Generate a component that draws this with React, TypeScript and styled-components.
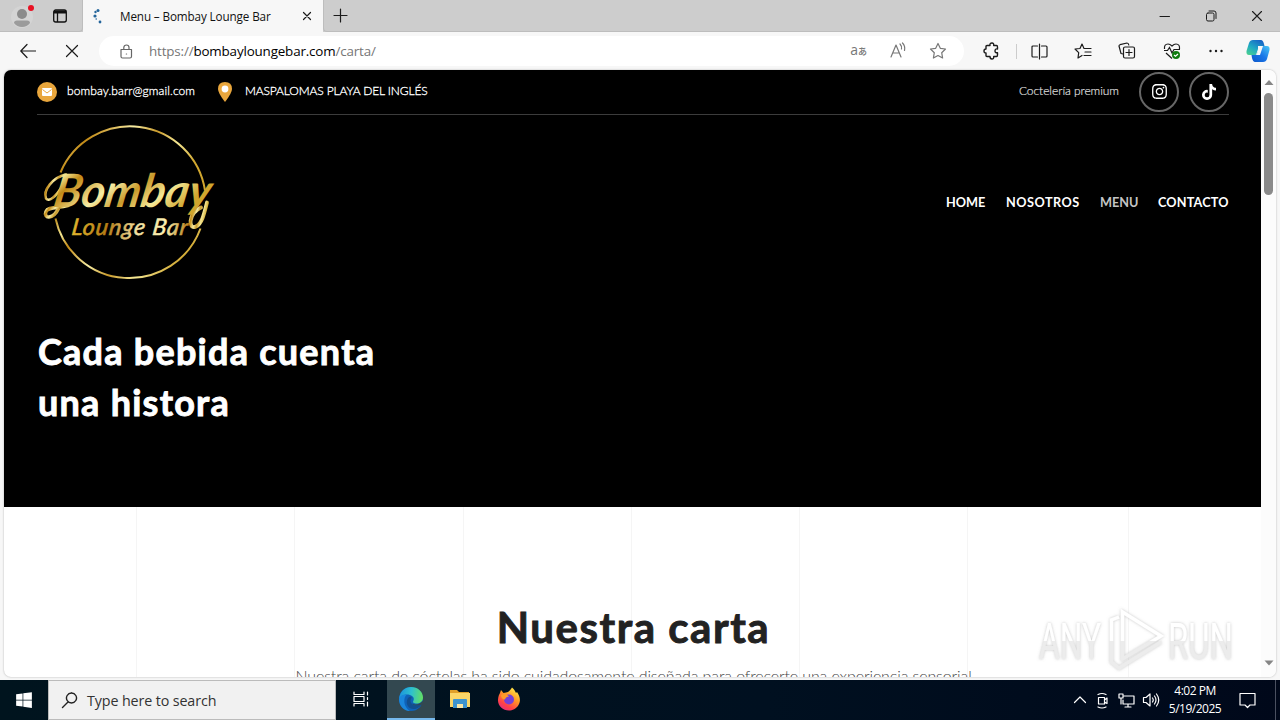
import React from 'react'
import styled, { createGlobalStyle } from 'styled-components'
import { FaInstagram, FaTiktok, FaWindows } from 'react-icons/fa6'

const GlobalStyle = createGlobalStyle`
  * {
    box-sizing: border-box;
  }

  body {
    margin: 0;
    overflow: hidden;
    background-color: #f7f7f7;
    font-family: 'Open Sans', 'Noto Sans', sans-serif;
  }

  svg {
    display: block;
    flex: none;
  }
`

const Desktop = styled.div`
  position: relative;
  display: flex;
  flex-direction: column;
  width: 1280px;
  height: 720px;
  overflow: hidden;
`

const TabStrip = styled.div`
  display: flex;
  height: 32px;
  background-color: #cdcdcd;
`

const Profile = styled.div`
  display: flex;
  align-items: center;
  gap: 16px;
  width: 83px;
  padding-left: 11px;
  border-right: 1px solid #bdbdbd;
  border-bottom: 1px solid #bdbdbd;
  border-bottom-right-radius: 4px;
`

const Tab = styled.div`
  display: flex;
  align-items: center;
  width: 240px;
  padding: 0 11px 0 9px;
  background-color: #f7f7f7;
`

const TabTitle = styled.span`
  flex: 1;
  margin-left: 16px;
  font-size: 11.7px;
  letter-spacing: -0.12px;
  white-space: nowrap;
  color: #111;
`

const StripRest = styled.div`
  display: flex;
  flex: 1;
  align-items: center;
  justify-content: space-between;
  padding: 0 17px 0 9px;
  border-bottom: 1px solid #bdbdbd;
  border-left: 1px solid #bdbdbd;
  border-bottom-left-radius: 4px;
`

const WindowButtons = styled.div`
  display: flex;
  align-items: center;
  gap: 34px;
`

const Toolbar = styled.div`
  display: flex;
  align-items: center;
  height: 38px;
  padding: 0 2px 0 20px;
  background-color: #f7f7f7;
`

const NavButtons = styled.div`
  display: flex;
  align-items: center;
  gap: 28px;
  width: 79px;
`

const AddressBar = styled.div`
  display: flex;
  align-items: center;
  width: 865px;
  height: 30px;
  padding: 0 17px 0 20px;
  border-radius: 15px;
  background-color: #fff;
`

const Url = styled.span`
  flex: 1;
  margin-left: 15px;
  font-size: 13.4px;
  letter-spacing: -0.16px;
  color: #767676;
`

const Host = styled.span`
  color: #000;
`

const AddressActions = styled.div`
  display: flex;
  align-items: center;
  gap: 22px;
  color: #777;
`

const Translate = styled.span`
  font-family: 'Open Sans', 'Noto Sans CJK JP', sans-serif;
  font-size: 14px;
  line-height: 18px;

  small {
    font-size: 9px;
    font-weight: 500;
  }
`

const ToolActions = styled.div`
  display: grid;
  grid-template-columns: 36px 8px repeat(5, 44.2px) 40px;
  align-items: center;
  justify-items: center;
  padding-left: 9px;
`

const Divider = styled.i`
  justify-self: end;
  width: 1px;
  height: 15px;
  background-color: #ccc;
`

const Viewport = styled.div`
  display: flex;
  height: 607px;
  margin: 0 4px 3px;
  border-radius: 7px;
  background-color: #fff;
  box-shadow: 0 0 2px #aaa;
  overflow: hidden;
`

const Page = styled.div`
  display: flex;
  flex-direction: column;
  width: 1257px;
  overflow: hidden;
  font-family: Lato, sans-serif;
`

const ScrollBar = styled.div`
  display: flex;
  flex: 1;
  flex-direction: column;
  align-items: center;
  padding: 10px 0 11px;
  background-color: #fcfcfc;
`

const Thumb = styled.div`
  width: 9px;
  height: 102px;
  margin: 7px 0 auto;
  border-radius: 5px;
  background-color: #8a8a8a;
`

const Hero = styled.header`
  flex: none;
  height: 437px;
  padding: 0 32px 0 33px;
  background-color: #000;
  color: #fff;
`

const TopBar = styled.div`
  display: flex;
  align-items: center;
  height: 45px;
  border-bottom: 1px solid #3c3c3c;
  font-size: 12px;
  font-weight: 300;
`

const Contact = styled.span<{ $spacing: number; $indent: number }>`
  margin-left: ${(props) => props.$indent}px;
  margin-top: -3px;
  letter-spacing: ${(props) => props.$spacing}px;
  white-space: nowrap;
  -webkit-text-stroke: 0.3px #fff;
`

const Badge = styled.span`
  display: flex;
  align-items: center;
  justify-content: center;
  width: 20px;
  height: 20px;
  border-radius: 50%;
  background-color: #e9a63c;
`

const PinBox = styled.span`
  width: 14px;
  margin-left: auto;
`

const MailGroup = styled.div`
  display: flex;
  align-items: center;
  width: 195px;
`

const Tagline = styled.span`
  margin: -3px 20px 0 auto;
  letter-spacing: -0.05px;
  color: #e4e4e4;
  -webkit-text-stroke: 0.15px #e4e4e4;
`

const Social = styled.a`
  display: flex;
  align-items: center;
  justify-content: center;
  width: 40px;
  height: 40px;
  padding-bottom: 1px;
  border: 2px solid #666;
  border-radius: 50%;

  & + & {
    margin-left: 10px;
  }
`

const Brand = styled.div`
  display: flex;
  align-items: center;
  justify-content: space-between;
  height: 174px;
`

const Menu = styled.nav`
  display: flex;
  gap: 20px;
`

const MenuLink = styled.a<{ $width: number; $active?: boolean }>`
  width: ${(props) => props.$width}px;
  font-size: 12.7px;
  font-weight: 700;
  letter-spacing: ${(props) => (props.$width > 70 ? (props.$width - 69.5) * 0.11 : 0)}px;
  white-space: nowrap;
  color: ${(props) => (props.$active ? '#c4c4c4' : '#fff')};
`

const HeroTitle = styled.h1`
  width: 360px;
  margin: 37px 0 0 1px;
  font-size: 36px;
  line-height: 51px;
  font-weight: 700;
  letter-spacing: 1.25px;
  -webkit-text-stroke: 0.9px #fff;
`

const Columns = styled.section`
  display: grid;
  flex: 1;
  grid-template-columns: 133px 158px 169px 168px 168px 168px 161px 1fr;
  grid-template-rows: 170px;
`

const Column = styled.i<{ $index: number }>`
  grid-row: 1;
  grid-column: ${(props) => props.$index};
  border-right: 1px solid #f5f5f5;
`

const Copy = styled.div`
  grid-row: 1;
  grid-column: 1 / -1;
  padding: 94px 0 0 2px;
  text-align: center;
`

const SectionTitle = styled.h2`
  margin: 0;
  font-size: 42px;
  line-height: 52px;
  letter-spacing: 1.55px;
  color: #222;
  -webkit-text-stroke: 0.9px #222;
`

const Intro = styled.p`
  margin: 13px 0 0;
  font-size: 16px;
  line-height: 20px;
  font-weight: 300;
  letter-spacing: -0.12px;
  white-space: nowrap;
  color: #444;
`

const Watermark = styled.div`
  position: absolute;
  left: 1030px;
  top: 602px;
`

const TaskBar = styled.footer`
  display: flex;
  height: 40px;
  background: linear-gradient(90deg, #00141e, #001020 60%, #00081a);
  color: #fff;
`

const Start = styled.div`
  display: flex;
  align-items: center;
  justify-content: center;
  width: 48px;
`

const Search = styled.div`
  display: flex;
  align-items: center;
  gap: 9px;
  width: 288px;
  padding-left: 12px;
  border: 1px solid #bbb;
  background-color: #f1f1f1;
  font-size: 14.3px;
  letter-spacing: -0.12px;
  color: #333;
`

const TaskButton = styled.div<{ $active?: boolean }>`
  display: flex;
  align-items: center;
  justify-content: center;
  width: ${(props) => (props.$active ? 48 : 49)}px;
  margin-left: ${(props) => (props.$active ? 2 : 0)}px;
  border-bottom: 2px solid ${(props) => (props.$active ? '#76b9ed' : 'transparent')};
  background-color: ${(props) => (props.$active ? '#334850' : 'transparent')};
`

const Tray = styled.div`
  display: flex;
  align-items: center;
  margin-left: auto;
  padding-right: 4px;
`

const TrayIcons = styled.div`
  display: flex;
  align-items: center;
  gap: 7px;
  margin-right: 1px;
`

const Clock = styled.div`
  display: flex;
  flex-direction: column;
  align-items: center;
  width: 68px;
  font-size: 12px;
  line-height: 18px;
  letter-spacing: -0.5px;
  white-space: nowrap;
`

const Notifications = styled.div`
  display: flex;
  align-items: center;
  width: 47px;
  height: 40px;
  padding-left: 10px;
  border-right: 1px solid #4a5060;
`

interface LineIconProps {
  d: string
  size?: number
  color?: string
  width?: number
}

function LineIcon({ d, size = 16, color = '#1b1b1b', width = 1.2 }: LineIconProps) {
  return (
    <svg
      width={size}
      height={size}
      viewBox={`0 0 ${size} ${size}`}
      fill="none"
      stroke={color}
      strokeWidth={width}
      strokeLinecap="round"
      strokeLinejoin="round"
    >
      <path d={d} />
    </svg>
  )
}

function BrandLogo() {
  return (
    <svg width="186" height="164" viewBox="37 119.5 186 164">
      <defs>
        <linearGradient id="gold" x1="0" y1="0" x2="1" y2="0.35">
          <stop offset="0" stopColor="#b98a1c" />
          <stop offset="0.12" stopColor="#f3e590" />
          <stop offset="0.22" stopColor="#c28a16" />
          <stop offset="0.45" stopColor="#f7eda4" />
          <stop offset="0.62" stopColor="#c99a2b" />
          <stop offset="0.8" stopColor="#f5e895" />
          <stop offset="1" stopColor="#d0a62e" />
        </linearGradient>
        <linearGradient id="goldSoft" x1="0" y1="0" x2="1" y2="0">
          <stop offset="0" stopColor="#e0b52e" />
          <stop offset="0.3" stopColor="#b57c14" />
          <stop offset="0.55" stopColor="#f1dfa0" />
          <stop offset="0.8" stopColor="#fbf1b0" />
          <stop offset="1" stopColor="#b57c14" />
        </linearGradient>
      </defs>
      <g fill="none" stroke="url(#gold)" strokeWidth="2">
        <path d="M60.500 172A75.700 75.700 0 0 1 205 190" />
        <path d="M200.500 228A75.700 75.700 0 0 1 55.500 218" />
      </g>
      {/* entry swash of the B, foot of the B and the tail of the y */}
      <g fill="none" stroke="url(#gold)" strokeLinecap="round">
        <path d="M66 174C52 177 43 190 46 198C49 202 56 196 62 186" strokeWidth="2.500" />
        <path d="M59 207C53 220 43 218 46 211C48 206 58 208 68 205" strokeWidth="3.500" />
        <path d="M201 207C188 213 188 230 196 226C202 223 204 214 207 202" strokeWidth="3.800" />
      </g>
      <g fontFamily="Lato, sans-serif" fontStyle="italic" fontWeight="700">
        <text
          x="0"
          y="0"
          transform="translate(52 206) skewX(-10)"
          fontSize="46"
          textLength="157"
          lengthAdjust="spacingAndGlyphs"
          fill="url(#gold)"
        >
          Bombay
        </text>
        <text
          x="0"
          y="0"
          transform="translate(71 234) skewX(-8)"
          fontSize="23"
          fontWeight="400"
          textLength="116"
          fill="url(#goldSoft)"
          stroke="url(#goldSoft)"
          strokeWidth="0.600"
        >
          Lounge Bar
        </text>
      </g>
    </svg>
  )
}

function CopilotIcon() {
  return (
    <svg width="24" height="24" viewBox="0 0 24 24">
      <defs>
        <linearGradient id="copA" x1="0" y1="1" x2="0.7" y2="0">
          <stop offset="0" stopColor="#4fd48a" />
          <stop offset="0.5" stopColor="#1fa9c4" />
          <stop offset="1" stopColor="#1766c6" />
        </linearGradient>
        <linearGradient id="copB" x1="1" y1="0" x2="0" y2="1">
          <stop offset="0" stopColor="#49c8f5" />
          <stop offset="0.5" stopColor="#1976e8" />
          <stop offset="1" stopColor="#0d57c9" />
        </linearGradient>
      </defs>
      <path d="M7 1H15Q17 1 18 5L18.500 7H15Q13 7 12 10L10 16H3Q0 16 .5 12L3 4Q4 1 7 1Z" fill="url(#copA)" />
      <path d="M17 23H9Q7 23 6 19L5.500 16H9Q11 16 12 13L14 7H21Q24 7 23.500 11L21 20Q20 23 17 23Z" fill="url(#copB)" />
      <path d="M12 7H17L14 16H9Q11 16 12 12Z" fill="#f7f7f7" />
    </svg>
  )
}

function EdgeIcon() {
  return (
    <svg width="26" height="26" viewBox="0 0 26 26">
      <defs>
        <linearGradient id="edgeTop" x1="0" y1="0.4" x2="1" y2="0.5">
          <stop offset="0" stopColor="#1b93dc" />
          <stop offset="0.5" stopColor="#2ec0cf" />
          <stop offset="1" stopColor="#63df62" />
        </linearGradient>
      </defs>
      <circle cx="13" cy="13" r="12" fill="#0f62b8" />
      <path
        d="M1 13C2 5 7 1 13 1C20 1 25 6 25 11.500C25 16 21 18 17.500 17.500C15 17 14.500 16 15.500 14.500C17 11 13 8.500 9 8.500C5 8.500 2 11 1 13Z"
        fill="url(#edgeTop)"
      />
      <path d="M14 17.500C17 19.500 22 18.500 24.500 15L26 17L23.500 19C20 20.500 15 20 14 17.500Z" fill="#334850" />
      <path d="M9.500 13C7 18 11 24 17 23C20 22.500 22.500 20.500 23.500 18.500C19 20.500 13 19.500 12.500 15C12.400 13 14 12 13.500 11C12 10.500 10.500 11 9.500 13Z" fill="#124f8f" />
      <path d="M1 13C2 9 6 8 9 8.500C5 11 5 21 12 25C5 25 1 19 1 13Z" fill="#1a86dc" />
    </svg>
  )
}

function FolderIcon() {
  return (
    <svg width="22" height="20" viewBox="0 0 22 20">
      <path d="M1 1H8L10 3H20V7H1Z" fill="#e0a02a" />
      <path d="M1 4H21V18H1Z" fill="#fbd668" />
      <path d="M4 19V11Q4 10 5 10H17Q18 10 18 11V19H14V15H8V19Z" fill="#3e94cf" />
      <path d="M8 19V15H14V19Z" fill="#fbe7a6" />
    </svg>
  )
}

function FirefoxIcon() {
  return (
    <svg width="24" height="24" viewBox="0 0 24 24">
      <defs>
        <linearGradient id="fox" x1="0.8" y1="0" x2="0.2" y2="1">
          <stop offset="0" stopColor="#fff04d" />
          <stop offset="0.4" stopColor="#ff9a24" />
          <stop offset="0.75" stopColor="#ff4147" />
          <stop offset="1" stopColor="#e42a82" />
        </linearGradient>
      </defs>
      <path
        d="M4 3L6.500 6L9 5.500C11 5.500 13 4 15 .5C17 2 18 4 19 6L20 5C23 9 24 14 21.500 18C19 22 15.500 23.500 12 23.500C5.500 23.500 .5 18.500 1 12.500C1.200 9 2.500 7 3 6Z"
        fill="url(#fox)"
      />
      <circle cx="12" cy="12.500" r="5" fill="#7340d8" />
      <path d="M4 8C7 6 10 7 12 9.500C10 9.500 8.500 10.500 8 12.500C6 12.500 4 11 4 8Z" fill="#ff9b28" />
    </svg>
  )
}

function AnyRunMark() {
  return (
    <svg width="210" height="72" viewBox="1030 602 210 72">
      <defs>
        <linearGradient id="mark" x1="0" y1="620" x2="0" y2="662" gradientUnits="userSpaceOnUse">
          <stop offset="0.500" stopColor="#fff" />
          <stop offset="0.510" stopColor="#ececec" />
        </linearGradient>
        <filter id="halo" x="-10%" y="-10%" width="120%" height="120%">
          <feDropShadow dx="0" dy="0" stdDeviation="1.500" floodColor="#888" floodOpacity="0.5" />
        </filter>
      </defs>
      <g filter="url(#halo)">
        <g fontFamily="Roboto, sans-serif" fontSize="50" fontWeight="400" fill="url(#mark)">
          <text x="1039" y="659" textLength="62" lengthAdjust="spacingAndGlyphs">
            ANY
          </text>
          <text x="1168" y="659" textLength="65" lengthAdjust="spacingAndGlyphs">
            RUN
          </text>
        </g>
        <g fill="none" stroke="url(#mark)" strokeWidth="3.500">
          <path d="M1122.500 612L1161 636L1122.500 659Z" />
          <path d="M1119 617L1111.500 620V662L1119 668L1161 642" />
        </g>
      </g>
    </svg>
  )
}

const menu = [
  { label: 'HOME', width: 40 },
  { label: 'NOSOTROS', width: 74 },
  { label: 'MENU', width: 38, active: true },
  { label: 'CONTACTO', width: 71 },
]

const star = 'M9 1.500L11.300 6.300L16.500 7L12.700 10.700L13.600 16L9 13.500L4.400 16L5.300 10.700L1.500 7L6.700 6.300Z'

function App() {
  return (
    <Desktop>
      <GlobalStyle />
      <TabStrip>
        <Profile>
          <svg width="25" height="26" viewBox="0 0 25 26">
            <circle cx="11" cy="14" r="11" fill="#d4d4d4" />
            <circle cx="11" cy="11" r="5" fill="#8b8b8b" />
            <path d="M3 20Q3 17.500 6 17.500H16Q19 17.500 19 20Q16 24 11 24Q6 24 3 20Z" fill="#9b9b9b" />
            <circle cx="20" cy="5" r="3" fill="#e81123" />
          </svg>
          <svg width="16" height="16" viewBox="0 0 16 16" fill="none" stroke="#111" strokeWidth="1.300">
            <rect x="1.700" y="2" width="12.600" height="12" rx="2" />
            <path d="M2 4H14" strokeWidth="3" />
            <path d="M5.500 5V14" />
          </svg>
        </Profile>
        <Tab>
          <svg width="12" height="16" viewBox="0 0 12 16" fill="#24659b">
            <circle cx="6" cy="2.500" r="1.500" />
            <circle cx="3.500" cy="4" r="1.200" />
            <circle cx="3" cy="8" r="1.600" />
            <circle cx="4.200" cy="11" r="0.800" />
            <circle cx="8" cy="14" r="1.400" />
          </svg>
          <TabTitle>Menu – Bombay Lounge Bar</TabTitle>
          <LineIcon size={10} d="M1.500 1.500L8.500 8.500M8.500 1.500L1.500 8.500" />
        </Tab>
        <StripRest>
          <LineIcon size={15} d="M7.500 1V14M1 7.500H14" />
          <WindowButtons>
            <LineIcon size={12} d="M1 6.500H10.500" width={1} />
            <LineIcon size={12} d="M3 3H7.500Q9 3 9 4.500V9.500Q9 11 7.500 11H3Q1.500 11 1.500 9.500V4.500Q1.500 3 3 3M4 1H9Q11 1 11 3V8.500" width={1} />
            <LineIcon size={12} d="M1.500 1.500L10.500 10.500M10.500 1.500L1.500 10.500" width={1.100} />
          </WindowButtons>
        </StripRest>
      </TabStrip>
      <Toolbar>
        <NavButtons>
          <LineIcon d="M15.500 8H1M7 1.500L.8 8L7 14.500" />
          <LineIcon d="M2.500 2.500L13.500 13.500M13.500 2.500L2.500 13.500" />
        </NavButtons>
        <AddressBar>
          <LineIcon size={15} color="#666" d="M2.500 5.500H12.500V12.500Q12.500 14 11 14H3.500Q2 14 2 12.500V5.500ZM4.800 5.500V3.500Q5 1 7.500 1Q10 1 10 3.500V5.500M7.300 10H7.600" />
          <Url>
            https://<Host>bombayloungebar.com</Host>/carta/
          </Url>
          <AddressActions>
            <Translate>
              a<small>あ</small>
            </Translate>
            <LineIcon size={18} color="#777" d="M2 15L7 3L12 15M4 11H10M11 2Q13 4 12.500 7M13.500 1Q16.500 4 15.500 8.500" />
            <LineIcon size={18} color="#777" d={star} />
          </AddressActions>
        </AddressBar>
        <ToolActions>
          <LineIcon size={18} width={1.400} d="M5 3.500H8Q7.500 1 10 1Q12 1 11.700 3.500H14.500Q15.500 3.500 15.500 5V7Q13 6.500 13 9Q13 11 15.500 10.800V13Q15.500 14.500 14.500 14.500H11.700Q12 17 10 17Q8 17 8 14.500H5Q4 14.500 4 13.500V11Q2 11 2 9Q2 7 4 7V4.500Q4 3.500 5 3.500Z" />
          <Divider />
          <LineIcon size={17} d="M6.500 3H2Q1 3 1 4V13Q1 14 2 14H6.500M8.500 1V16M10.500 3H15Q16 3 16 4V13Q16 14 15 14H10.500" />
          <LineIcon size={18} d="M10 6.500L8 2L6 6.500L1 7L4.700 10.700L4 16L8 13.500M10 6.500H17M11 10H17M10 13.500H17" />
          <LineIcon size={18} d="M5 12L3 11.500L1 4Q1 3 2 2.700L9 1Q10.500 1 10.800 3M7 5H15Q16.500 5 16.500 6.500V14.500Q16.500 16 15 16H7Q5.500 16 5.500 14.500V6.500Q5.500 5 7 5ZM11 7.500V13.500M8 10.500H14" />
          <svg width="18" height="18" viewBox="0 0 18 18" fill="none" stroke="#1b1b1b" strokeWidth="1.200">
            <path d="M1.500 7Q1 2 5 2Q7 2 9 4Q11 2 13 2Q17 2 16.500 7M1 8.500H4.500L6.500 5.500L9 11L11 7.500H17M3 11L9 16.500" />
            <circle cx="13" cy="13" r="4" fill="#107c10" stroke="none" />
            <path d="M11 13L12.500 14.300L15 12" stroke="#fff" />
          </svg>
          <svg width="16" height="16" viewBox="0 0 16 16" fill="#1b1b1b">
            <circle cx="2.500" cy="8" r="1.200" />
            <circle cx="8" cy="8" r="1.200" />
            <circle cx="13.500" cy="8" r="1.200" />
          </svg>
          <CopilotIcon />
        </ToolActions>
      </Toolbar>
      <Viewport>
        <Page>
          <Hero>
            <TopBar>
              <MailGroup>
                <Badge>
                  <svg width="10" height="8" viewBox="0 0 10 8">
                    <rect width="10" height="8" rx="1" fill="#fff" />
                    <path d="M.5 1.500L5 5L9.500 1.500" fill="none" stroke="#e9a63c" />
                  </svg>
                </Badge>
                <Contact $indent={10} $spacing={0.09}>
                  bombay.barr@gmail.com
                </Contact>
                <PinBox>
                  <svg width="14" height="20" viewBox="0 0 14 20">
                    <path d="M7 0Q14 0 14 7Q14 11 7 20Q0 11 0 7Q0 0 7 0Z" fill="#e9a63c" />
                    <circle cx="7" cy="7" r="3.400" fill="#fff" />
                  </svg>
                </PinBox>
              </MailGroup>
              <Contact $indent={13} $spacing={-0.11}>
                MASPALOMAS PLAYA DEL INGLÉS
              </Contact>
              <Tagline>Coctelería premium</Tagline>
              <Social>
                <FaInstagram size={17} />
              </Social>
              <Social>
                <FaTiktok size={16} />
              </Social>
            </TopBar>
            <Brand>
              <BrandLogo />
              <Menu>
                {menu.map((item) => (
                  <MenuLink key={item.label} $width={item.width} $active={item.active}>
                    {item.label}
                  </MenuLink>
                ))}
              </Menu>
            </Brand>
            <HeroTitle>
              Cada bebida cuenta
              <br />
              una histora
            </HeroTitle>
          </Hero>
          <Columns>
            {[1, 2, 3, 4, 5, 6, 7].map((n) => (
              <Column key={n} $index={n} />
            ))}
            <Copy>
              <SectionTitle>Nuestra carta</SectionTitle>
              <Intro>
                Nuestra carta de cóctelas ha sido cuidadosamente diseñada para ofrecerte una
                experiencia sensorial
              </Intro>
            </Copy>
          </Columns>
        </Page>
        <ScrollBar>
          <svg width="10" height="6" viewBox="0 0 10 6">
            <path d="M5 0L9.500 5H.5Z" fill="#858585" />
          </svg>
          <Thumb />
          <svg width="10" height="6" viewBox="0 0 10 6">
            <path d="M5 5.500L9.500 .5H.5Z" fill="#858585" />
          </svg>
        </ScrollBar>
      </Viewport>
      <Watermark>
        <AnyRunMark />
      </Watermark>
      <TaskBar>
        <Start>
          <FaWindows size={18} />
        </Start>
        <Search>
          <LineIcon size={17} color="#222" width={1.400} d="M10.500 1A5 5 0 1 1 10.490 1M7 10L1.500 15.500" />
          Type here to search
        </Search>
        <TaskButton>
          <LineIcon size={18} color="#fff" d="M2 2V4.500H12V2M2 16V13.500H12V16M2 6.500H12V11.500H2ZM15.500 2V5M15.500 7.500V9.500M15.500 12V16" />
        </TaskButton>
        <TaskButton $active>
          <EdgeIcon />
        </TaskButton>
        <TaskButton>
          <FolderIcon />
        </TaskButton>
        <TaskButton>
          <FirefoxIcon />
        </TaskButton>
        <Tray>
          <TrayIcons>
            <LineIcon size={14} color="#fff" d="M1.500 9.500L7 4L12.500 9.500" />
            <LineIcon size={17} color="#fff" d="M4.500 5.500H10.500V12H4.500ZM10.500 8L13 6V11.500L10.500 10M4 2.500Q8 .5 12 2.500M4 15Q8 17 12 15" />
            <LineIcon size={17} color="#fff" d="M6 4H16V12H5V8M1 2H5V6H1ZM3 6V12M10 12V15M7 15H13" />
            <LineIcon size={18} color="#fff" d="M1.500 6.500H4L8 3V15L4 11.500H1.500ZM10.500 7Q12 9 10.500 11M12.500 5Q15.500 9 12.500 13M14.500 3Q19 9 14.500 15" />
          </TrayIcons>
          <Clock>
            <span>4:02 PM</span>
            <span>5/19/2025</span>
          </Clock>
          <Notifications>
            <LineIcon size={17} color="#fff" d="M1 1.500H16V13H11L8.500 15.500L6 13H1Z" />
          </Notifications>
        </Tray>
      </TaskBar>
    </Desktop>
  )
}

export default App
